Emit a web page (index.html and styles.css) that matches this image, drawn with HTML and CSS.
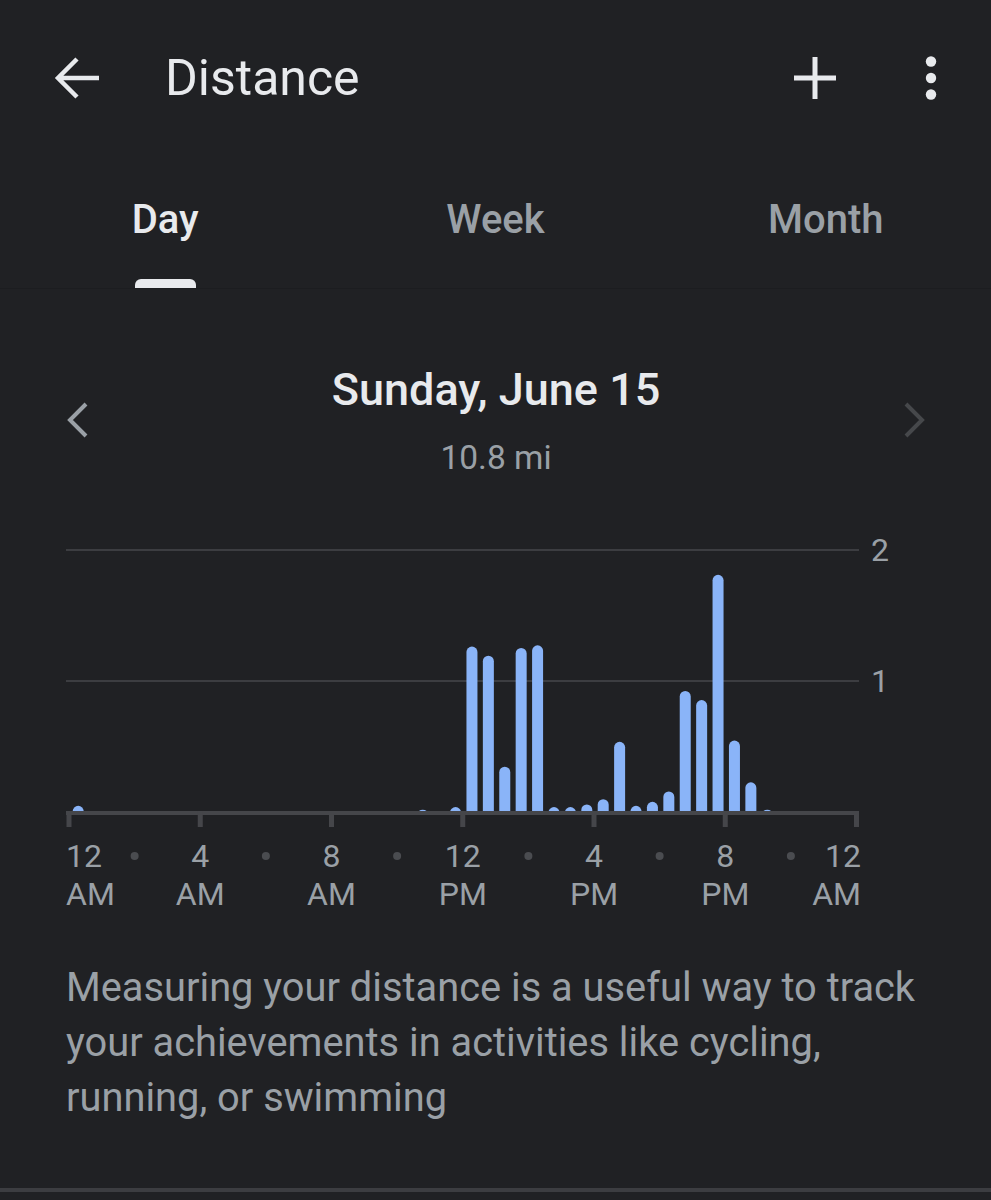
FILE: index.html
```html
<!DOCTYPE html>
<html lang="en">
<head>
    <meta charset="UTF-8">
    <meta name="viewport" content="width=device-width, initial-scale=1.0">
    <title>Distance</title>
    <link rel="stylesheet" href="styles.css">
</head>

<body>
    <header class="app-bar">
        <svg class="back-icon" width="48" height="48" viewBox="0 0 48 48">
            <path d="M46 24H6 M24 5L5 24L24 43" />
        </svg>
        <h1 class="app-title">Distance</h1>
        <div class="app-actions">
            <svg class="add-icon" width="46" height="46" viewBox="0 0 46 46">
                <path d="M23 2V44 M2 23H44" />
            </svg>
            <svg class="more-icon" width="12" height="46" viewBox="0 0 12 46">
                <circle cx="6" cy="6.5" r="5.2" />
                <circle cx="6" cy="23" r="5.2" />
                <circle cx="6" cy="39.5" r="5.2" />
            </svg>
        </div>
    </header>

    <nav class="tabs">
        <div class="tab active">
            <span class="tab-label">Day</span>
            <i class="tab-indicator"></i>
        </div>
        <div class="tab">
            <span class="tab-label">Week</span>
        </div>
        <div class="tab">
            <span class="tab-label">Month</span>
        </div>
    </nav>

    <main class="content">
        <div class="date-nav">
            <svg class="chevron" width="24" height="38" viewBox="0 0 24 38">
                <path d="M21 3L5 19L21 35" />
            </svg>
            <div class="date-info">
                <h2 class="date-title">Sunday, June 15</h2>
                <div class="date-total">10.8 mi</div>
            </div>
            <svg class="chevron disabled" width="24" height="38" viewBox="0 0 24 38">
                <path d="M3 3L19 19L3 35" />
            </svg>
        </div>

        <!-- chart uses page coordinates in its viewBox -->
        <svg class="chart" id="chart" width="991" height="430" viewBox="0 490 991 430">
            <defs>
                <clipPath id="plotArea">
                    <rect x="0" y="490" width="991" height="322" />
                </clipPath>
            </defs>
            <rect class="grid-line" x="66" y="550" width="793" height="2" />
            <rect class="grid-line" x="66" y="681" width="793" height="2" />
            <text class="axis-label" x="880" y="562" text-anchor="middle">2</text>
            <text class="axis-label" x="880" y="693" text-anchor="middle">1</text>
            <g id="bars" clip-path="url(#plotArea)"></g>
            <rect class="axis-line" x="66" y="812" width="793" height="4" />
            <g id="ticks"></g>
            <g id="labels"></g>
        </svg>

        <p class="description">Measuring your distance is a useful way to track your achievements in activities like cycling, running, or swimming</p>
    </main>

    <div class="divider"></div>

    <script>
        // distance per half hour slot (miles)
        const slots = {
            0: 0.04, 21: 0.01, 23: 0.03, 24: 1.26, 25: 1.19, 26: 0.34, 27: 1.25,
            28: 1.27, 29: 0.03, 30: 0.03, 31: 0.05, 32: 0.09, 33: 0.53, 34: 0.04,
            35: 0.07, 36: 0.15, 37: 0.92, 38: 0.85, 39: 1.81, 40: 0.54, 41: 0.22, 42: 0.01
        };

        const ns = 'http://www.w3.org/2000/svg';
        const baseY = 812;
        const unit = 130.5;
        const left = 69;
        const right = 856.5;
        const slotWidth = (right - left) / 48;

        function el(name, attrs, text) {
            const node = document.createElementNS(ns, name);
            for (const key in attrs) node.setAttribute(key, attrs[key]);
            if (text) node.textContent = text;
            return node;
        }

        // bars
        const bars = document.getElementById('bars');
        Object.keys(slots).forEach(function(i) {
            const h = slots[i] * unit;
            const cx = left + slotWidth * (Number(i) + 0.5) + 1;
            bars.appendChild(el('rect', {
                class: 'bar', x: cx - 5.5, y: baseY - h, width: 11, height: h + 8, rx: 5.5
            }));
        });

        // ticks, dots and time labels
        const ticks = document.getElementById('ticks');
        const labels = document.getElementById('labels');
        const times = [['12', 'AM'], ['4', 'AM'], ['8', 'AM'], ['12', 'PM'], ['4', 'PM'], ['8', 'PM'], ['12', 'AM']];
        const step = (right - left) / 6;

        times.forEach(function(t, k) {
            const x = left + step * k;
            ticks.appendChild(el('rect', { class: 'axis-line', x: x - 2.5, y: baseY, width: 5, height: 16 }));

            let anchor = 'middle';
            let tx = x;
            if (k === 0) { anchor = 'start'; tx = 66; }
            if (k === times.length - 1) { anchor = 'end'; tx = 861; }
            labels.appendChild(el('text', { class: 'axis-label', x: tx, y: 868, 'text-anchor': anchor }, t[0]));
            labels.appendChild(el('text', { class: 'axis-label', x: tx, y: 906, 'text-anchor': anchor }, t[1]));

            if (k < times.length - 1) {
                labels.appendChild(el('circle', { class: 'axis-dot', cx: x + step / 2, cy: 857, r: 4 }));
            }
        });
    </script>
</body>
</html>
```

FILE: styles.css
```css
body {
    margin: 0;
    background-color: #202124;
    font-family: Roboto, "Liberation Sans", sans-serif;
    color: #e8eaed;
    width: 991px;
}

.app-bar {
    height: 156px;
    display: flex;
    align-items: center;
    padding: 0 54px 0 53px;
}

.back-icon path,
.add-icon path,
.chevron path {
    fill: none;
    stroke: #e8eaed;
}

.back-icon path {
    stroke-width: 4.5;
}

.add-icon path {
    stroke-width: 5;
}

.more-icon circle {
    fill: #e8eaed;
}

.app-title {
    margin: 0 0 0 64px;
    font-size: 50px;
    line-height: 50px;
    font-weight: 400;
    color: #e8eaed;
}

.app-actions {
    margin-left: auto;
    display: flex;
    align-items: center;
    gap: 87px;
}

.tabs {
    height: 132px;
    display: grid;
    grid-template-columns: repeat(3, 1fr);
    box-shadow: 0 1px 0 #1c1d20;
}

.tab {
    display: flex;
    flex-direction: column;
    align-items: center;
    padding-top: 40px;
}

.tab-label {
    font-size: 40px;
    line-height: 48px;
    font-weight: 500;
    color: #9aa0a6;
}

.tab.active .tab-label {
    color: #e8eaed;
}

.tab-indicator {
    display: block;
    width: 61px;
    height: 9px;
    margin-top: 35px;
    background-color: #e8eaed;
    border-radius: 6px 6px 0 0;
}

.content {
    padding-top: 74px;
}

.date-nav {
    display: flex;
    align-items: center;
    padding: 0 64px 0 65px;
}

.chevron path {
    stroke: #9aa0a6;
    stroke-width: 4;
}

.chevron.disabled path {
    stroke: #46484b;
}

.date-info {
    flex: 1;
    text-align: center;
}

.date-title {
    margin: 0;
    font-size: 45px;
    line-height: 56px;
    font-weight: 500;
    color: #e8eaed;
}

.date-total {
    margin-top: 20px;
    font-size: 33.5px;
    line-height: 40px;
    color: #9aa0a6;
}

.chart {
    display: block;
    margin-top: 11px;
}

.grid-line {
    fill: #3c3d41;
}

.axis-line {
    fill: #45464a;
}

.axis-dot {
    fill: #4a4c50;
}

.axis-label {
    font-family: Roboto, "Liberation Sans", sans-serif;
    font-size: 32px;
    fill: #9aa0a6;
}

.bar {
    fill: #8ab4f8;
}

.description {
    margin: 41px 66px 0;
    font-size: 39.8px;
    line-height: 55px;
    color: #9aa0a6;
}

.divider {
    margin-top: 63px;
    height: 4px;
    background-color: #3c3d41;
}
```
